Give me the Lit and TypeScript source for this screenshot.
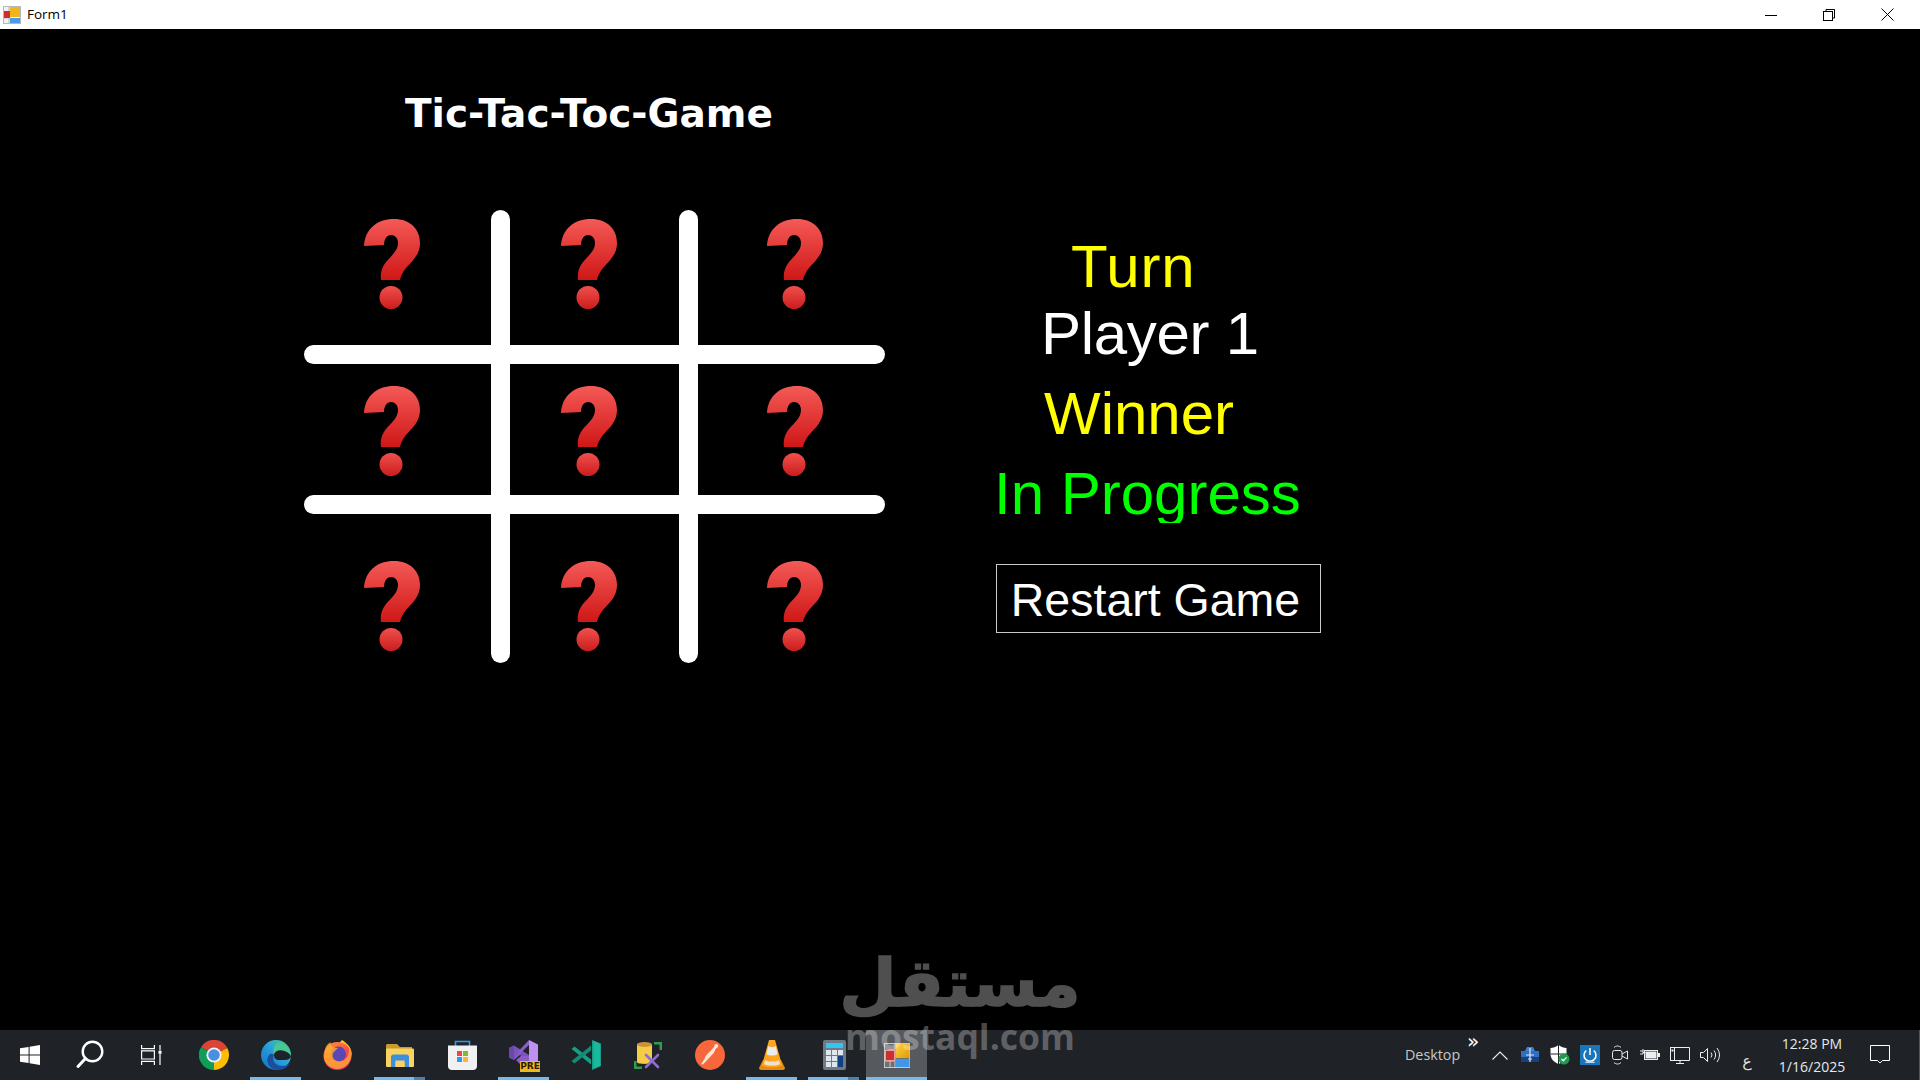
import { LitElement, html, css, svg } from "lit";
import { customElement } from "lit/decorators.js";

const question = () => html`<svg class="q" width="56" height="90" viewBox="0 0 56 90">
  <defs>
    <linearGradient id="qa" x1="0" y1="0" x2="0" y2="1"><stop offset="0" stop-color="#f45a56"/><stop offset="1" stop-color="#cf1717"/></linearGradient>
    <linearGradient id="qb" x1="0" y1="0" x2="0" y2="1"><stop offset="0" stop-color="#f0504c"/><stop offset="1" stop-color="#ca1d1d"/></linearGradient>
  </defs>
  <path fill="url(#qa)" d="M0 27C1 10 13 0 30 0C46 0 56 10 56 24C56 36 48 42 42 49C39 53 37 56 36 61H17C16 54 18 48 22 43C27 37 34 32 34 24C34 19 31 16 27 16C23 16 20 20 20 26Z"/>
  <circle cx="27" cy="78.5" r="11.5" fill="url(#qb)"/>
</svg>`;

const icons: Record<string, unknown> = {
  win: svg`<svg width="20" height="20" viewBox="0 0 20 20"><path fill="#fff" d="M0 3.2L8.6 2V9.6H0ZM9.6 1.8L20 0V9.6H9.6ZM0 10.6H8.6V18L0 16.8ZM9.6 10.6H20V20L9.6 18.2Z"/></svg>`,
  search: svg`<svg width="30" height="30" viewBox="0 0 30 30" fill="none" stroke="#fff"><circle cx="17.5" cy="11.5" r="9.8" stroke-width="2.4"/><path d="M10.5 18.5L3 26.5" stroke-width="3" stroke-linecap="round"/></svg>`,
  task: svg`<svg width="21" height="20" viewBox="0 0 21 20" fill="none" stroke="#fff" stroke-width="1.2"><path d="M0.6 0V3.6H13.4V0M0.6 5.8H13.4V14H0.6ZM0.6 20V16.4H13.4V20M19 0V5.5M19 9V20"/><rect x="17.5" y="5.8" width="3" height="3" fill="#fff" stroke="none"/></svg>`,
  chrome: svg`<svg width="30" height="30" viewBox="0 0 30 30"><path fill="#db4437" d="M15 15L2.2 7A15 15 0 0 1 28.3 8Z"/><path fill="#fbbc04" d="M15 15L28.3 8A15 15 0 0 1 15 30Z"/><path fill="#0f9d58" d="M15 15L15 30A15 15 0 0 1 2.2 7Z"/><circle cx="15" cy="15" r="7.6" fill="#f1f3f4"/><circle cx="15" cy="15" r="5.8" fill="#4a90e2"/></svg>`,
  edge: svg`<svg width="30" height="30" viewBox="0 0 30 30"><defs><linearGradient id="eg" x1="0" y1="1" x2="1" y2="0"><stop offset="0" stop-color="#0f70c4"/><stop offset=".55" stop-color="#2aa3dc"/><stop offset="1" stop-color="#52d67c"/></linearGradient></defs><circle cx="15" cy="15" r="15" fill="url(#eg)"/><path fill="#1f2227" d="M13 15C13 11 17 9.6 21 10.4C25 11.2 29 13 30 16.5C29.5 18.5 27 20 24 20H18C15 20 13 18 13 15Z"/><path fill="#1c4e9c" d="M8 15C4 20 7 29 16 30C22 30.5 27 27 29 23C26 26 22 26.5 18 25.5C13 24 11 19 13 15C11 13 9 13.5 8 15Z"/><path fill="#49c98e" d="M17 3C23 3 29 7 30 15.5C28 12 24 10 20 10C16 10 14 12 13 14C12 9 13 5 17 3Z"/></svg>`,
  firefox: svg`<svg width="30" height="30" viewBox="0 0 30 30"><defs><linearGradient id="ff" x1="0" y1="0" x2=".6" y2="1"><stop offset="0" stop-color="#ff9a2e"/><stop offset=".6" stop-color="#ff4a4a"/><stop offset="1" stop-color="#e5266e"/></linearGradient></defs><path fill="#ffc52e" d="M19 0C24 3 29 8 28.5 15H14C13 9 15 4 19 0Z"/><circle cx="14.5" cy="16" r="14" fill="url(#ff)"/><circle cx="15.5" cy="14" r="7.5" fill="#5b46b5"/><path fill="#ffb42e" d="M2 12C2 6 5 3 8 2.5C7.5 5 8.5 7 11 7.5L15 8L11 12C9 14 9 18 12 20C16 23 23 21 25 15C27 10 26 8 25 5C28.5 9 29 13 28.5 16C27 24 21 29 14.5 29C7 29 1 23 1 16Z" opacity=".75"/></svg>`,
  explorer: svg`<svg width="28" height="24" viewBox="0 0 28 24"><path fill="#c99a2e" d="M0 3C0 1.5 .5 1 2 1H11L14 4H26V8H0Z"/><rect x="0" y="5.5" width="28" height="18.5" rx="1" fill="#f9d25f"/><path fill="#3d8fe0" d="M5 24V14C5 12.5 6 11.5 7.5 11.5H20.5C22 11.5 23 12.5 23 14V24H18.5V17.5H9.5V24Z"/><rect x="9.5" y="19" width="9" height="5" fill="#f9d25f"/></svg>`,
  store: svg`<svg width="29" height="30" viewBox="0 0 29 30"><path fill="none" stroke="#2e9be6" stroke-width="1.6" d="M7.5 7V1.5H21.5V7"/><path fill="#f1f1f1" d="M0 5.5H29V26C29 28.5 27.5 30 25 30H4C1.5 30 0 28.5 0 26Z"/><rect x="9" y="11" width="5" height="5" fill="#ea4a3b"/><rect x="15" y="11" width="5" height="5" fill="#7ebb2e"/><rect x="9" y="17" width="5" height="5" fill="#2c9be6"/><rect x="15" y="17" width="5" height="5" fill="#fbb82a"/></svg>`,
  vs: svg`<svg width="30" height="30" viewBox="0 0 30 30"><path fill="#7a54b8" d="M0 8L5 5.5L20 15L20 21L11 15L5 20L0 17.5Z"/><path fill="#6a49ad" d="M0 8V17.5L5 20V5.5Z"/><path fill="#c090f0" d="M20 0L29 4.5V22H20Z"/><path fill="#8a5ec8" d="M6 18.5L20 5V0L11 9.5Z M20 22V16L12 16L7 20L12 25Z"/></svg>`,
  code: svg`<svg width="30" height="30" viewBox="0 0 30 30"><path fill="#14a087" d="M21 0L30 3.5V26L21 30Z"/><path fill="#1bb89c" d="M22.5 1L29 4V26L22.5 28.5Z"/><path fill="#14a087" d="M0.5 9L3.5 6.5L20 19.5V24.5L17 22Z"/><path fill="#0e8c76" d="M.5 21L3.5 23.5L20 10.5V5.5L17 8Z"/></svg>`,
  sql: svg`<svg width="28" height="28" viewBox="0 0 28 28"><path fill="#2e9b4e" d="M20 1H28V9H25.5V3.5H20ZM0 20H2.5V25.5H8V28H0Z"/><path fill="#f6cc45" d="M3 4C3 1 18 1 18 4V21C18 23.5 3 23.5 3 21Z"/><ellipse cx="10.5" cy="3.5" rx="7.5" ry="2.5" fill="#c9953a"/><path d="M12 14L24 26M24 14L12 26" stroke="#8d6cd6" stroke-width="2.6" stroke-linecap="round"/></svg>`,
  postman: svg`<svg width="30" height="30" viewBox="0 0 30 30"><circle cx="15" cy="15" r="15" fill="#f8673b"/><path fill="#f8e7d6" d="M21 4C23 4 24 6 22.5 7.5L20.5 9C20 12 17 15 15 17L8 24.5L6 24L9.5 19C10 16 13 13 15.5 11L19 7C19 5 20 4 21 4Z"/></svg>`,
  vlc: svg`<svg width="26" height="30" viewBox="0 0 26 30"><path fill="#e88a10" d="M4 20L0 28C0 29 1 30 2 30H24C25 30 26 29 26 28L22 20Z"/><path fill="#ffa51f" d="M10 0H16L23 25C21 28 5 28 3 25Z"/><path fill="#ececec" d="M9.2 6C11 7.5 15 7.5 16.8 6L18.5 14C16 16 10 16 7.5 14Z"/><path fill="#ececec" d="M6.2 20C9 22 17 22 19.8 20L21 24C18 26 8 26 5 24Z" opacity=".85"/></svg>`,
  calc: svg`<svg width="23" height="30" viewBox="0 0 23 30"><rect width="23" height="30" rx="2" fill="#707a84"/><rect x="3" y="3" width="17" height="5" fill="#35c5ee"/><g fill="#dfe6ee"><rect x="3" y="10" width="5" height="5"/><rect x="9" y="10" width="5" height="5"/><rect x="15" y="10" width="5" height="5"/><rect x="3" y="16" width="5" height="5"/><rect x="9" y="16" width="5" height="5"/><rect x="3" y="22" width="5" height="5"/><rect x="9" y="22" width="5" height="5"/></g><rect x="15" y="16" width="5" height="11" fill="#123e84"/></svg>`,
  form: svg`<svg width="26" height="25" viewBox="0 0 26 25"><rect x=".5" y=".5" width="25" height="24" fill="#6d6f72" stroke="#c8c8c8"/><path d="M11 1V24M1 18H11M6 18V24M1 7H11" stroke="#c8c8c8"/><defs><linearGradient id="fy" x1="0" y1="0" x2="1" y2="1"><stop offset="0" stop-color="#ffd44a"/><stop offset="1" stop-color="#e09a00"/></linearGradient></defs><rect x="11.5" y="1" width="14" height="14" fill="url(#fy)"/><rect x="11.5" y="16" width="14" height="8" fill="#3f97e6"/><rect x="1.5" y="7.5" width="9" height="10" fill="#cf2e2e" stroke="#e8a0a0"/></svg>`,
  toolbox: svg`<svg width="18" height="18" viewBox="0 0 18 18"><path fill="#2f6fc2" d="M0 5H18V16H0Z"/><path fill="#1c3f7c" d="M0 11H18V16H0Z"/><path fill="#3f7fd6" d="M4 5L6 1H12L14 5Z"/><path stroke="#dfe8f4" stroke-width="1.2" d="M9 2V16M5 9H13M7 13H11"/></svg>`,
  shield: svg`<svg width="20" height="20" viewBox="0 0 20 20"><path fill="#fff" d="M8.5 0C6 2 3 3 .5 3V9C.5 14 4 17 8.5 19C13 17 16.5 14 16.5 9V3C14 3 11 2 8.5 0Z"/><path stroke="#1f2227" stroke-width="1" d="M8.5 0V19M.5 9H16.5"/><circle cx="14" cy="14" r="5.5" fill="#1f9b4e"/><path d="M11.5 14L13.3 15.8L16.5 12.4" fill="none" stroke="#fff" stroke-width="1.3"/></svg>`,
  power: svg`<svg width="20" height="20" viewBox="0 0 20 20"><rect width="20" height="20" fill="#1b75bb"/><path d="M10 3V10M6.3 5.5A6 6 0 1 0 13.7 5.5" fill="none" stroke="#fff" stroke-width="1.5"/><rect x="5.5" y="16.5" width="9" height="1.5" fill="#bcd8ee"/></svg>`,
  cam: svg`<svg width="16" height="20" viewBox="0 0 16 20" fill="none" stroke="#e8e8e8"><rect x=".5" y="5.5" width="9.5" height="9" rx="2"/><path d="M10 9L15.5 6V14L10 11M2 2.5C4 .5 7 .5 9 2.5M2 17.5C4 19.5 7 19.5 9 17.5"/></svg>`,
  battery: svg`<svg width="20" height="14" viewBox="0 0 20 14"><path d="M0 3H3V1M0 6H3V3M3 4.5H5.5" stroke="#eee" fill="none"/><rect x="4.5" y="2.5" width="13" height="9" fill="none" stroke="#eee"/><rect x="5.5" y="3.5" width="11" height="7" fill="#eee"/><rect x="18" y="5" width="2" height="4" fill="#eee"/></svg>`,
  net: svg`<svg width="20" height="17" viewBox="0 0 20 17" fill="none" stroke="#eee"><path d="M4.5 .5H19.5V13.5H1.5M10 13.5V16.5M6 16.5H14"/><rect x=".5" y=".5" width="4" height="13" fill="#1f2227"/><rect x="1.5" y="2.5" width="2" height="2" fill="#eee" stroke="none"/></svg>`,
  vol: svg`<svg width="21" height="16" viewBox="0 0 21 16" fill="none" stroke="#eee"><path d="M.5 5.5H3.5L7.5 1.5V14.5L3.5 10.5H.5ZM11 5.5A4 4 0 0 1 11 10.5M14 3.5A7 7 0 0 1 14 12.5M17 1A11 11 0 0 1 17 15"/></svg>`,
  note: svg`<svg width="20" height="20" viewBox="0 0 20 20" fill="none" stroke="#fff"><path d="M.5 .5H19.5V15.5H12.5L10 18L7.5 15.5H.5Z"/></svg>`,
};

@customElement("app-root")
export class AppRoot extends LitElement {
  static styles = css`
    :host { display: block; width: 1920px; height: 1080px; position: relative; overflow: hidden; background: #000; font-family: "Liberation Sans", Arial, sans-serif; }
    .app { display: flex; flex-direction: column; height: 1080px; }

    .titlebar { height: 29px; flex: none; background: #fff; display: flex; align-items: center; padding-right: 4px; }
    .app-icon { margin-left: 3px; margin-right: 6px; display: flex; }
    .title-text { font: 13.5px/18px "Open Sans", sans-serif; color: #000; flex: 1; position: relative; top: -1px; }
    .ctrl { width: 58px; display: flex; justify-content: center; align-items: center; }
    .ctrl svg { display: block; }

    .main { flex: 1; background: #000; display: flex; flex-direction: column; }
    .heading { height: 181px; flex: none; padding: 65px 0 0 405px; box-sizing: border-box; font: bold 39px/40px "DejaVu Sans", sans-serif; color: #fff; }
    .content { display: flex; align-items: flex-start; padding-left: 304px; }

    .board { display: grid; grid-template-columns: 187px 19px 169px 19px 187px; grid-template-rows: 135px 19px 131px 19px 149px; width: 581px; height: 453px; flex: none; }
    .v { background: #fff; border-radius: 10px; grid-row: 1 / 6; }
    .v1 { grid-column: 2; }
    .v2 { grid-column: 4; }
    .h { background: #fff; border-radius: 10px; grid-column: 1 / 6; }
    .h1 { grid-row: 2; }
    .h2 { grid-row: 4; }
    .cell { display: flex; justify-content: flex-start; align-items: flex-start; }
    .q { display: block; }

    .panel { margin-left: 111px; padding-top: 23px; display: flex; flex-direction: column; }
    .label { font-size: 60px; line-height: 68px; overflow: hidden; white-space: nowrap; }
    .turn { height: 67px; padding-left: 75px; color: #ff0; letter-spacing: .8px; }
    .player { height: 80px; padding-left: 45px; color: #fff; letter-spacing: -.3px; }
    .winner { height: 80px; padding-left: 48px; color: #ff0; }
    .status { height: 63px; margin-left: -2px; color: #0f0; margin-bottom: 41px; }
    .restart { width: 325px; height: 69px; box-sizing: border-box; border: 1px solid #c9c9c9; background: #000; color: #fff; font: 46.5px/68px "Liberation Sans", Arial, sans-serif; padding: 1px 6px 0 0; margin: 0; text-align: center; }

    .taskbar { height: 50px; flex: none; background: #1f2227; display: flex; align-items: stretch; color: #ddd; }
    .btn { width: 62px; flex: none; position: relative; display: flex; align-items: center; justify-content: center; }
    .btn.sys { width: 60px; }
    .btn.sys.last { width: 63px; }
    .btn.active::after { content: ""; position: absolute; left: 5px; right: 6px; bottom: 0; height: 3px; background: #76b9ed; }
    .btn.stack::before { content: ""; position: absolute; left: 45px; width: 11px; bottom: 0; height: 3px; background: #4a82ae; z-index: 1; }
    .btn.focus { background: #56595e; width: 61px; margin-left: 1px; }
    .btn.focus::after { left: 0; right: 0; }
    .badge { position: absolute; left: 27px; top: 31px; width: 20px; height: 11px; background: #f3b61c; color: #2a2000; font: bold 9px/11px "DejaVu Sans", sans-serif; text-align: center; }
    .spacer { flex: 1; }
    .tray { display: flex; align-items: center; position: relative; flex: none; width: 520px; }
    .desk { font: 14.3px "Open Sans", sans-serif; color: #c8c8c8; width: 85px; padding-left: 5px; box-sizing: border-box; position: relative; top: -1px; }
    .more { position: absolute; left: 67px; top: -1px; font: 20px "DejaVu Sans", sans-serif; color: #fff; }
    .tico { width: 30px; display: flex; justify-content: center; align-items: center; flex: none; }
    .lang { width: 30px; margin-left: 7px; text-align: center; font: 16px "DejaVu Sans", sans-serif; color: #ddd; flex: none; position: relative; top: 5px; }
    .clock { width: 100px; text-align: center; font: 14px/23px "Open Sans", sans-serif; color: #e8e8e8; flex: none; }
    .note { width: 38px; margin-left: -1px; display: flex; justify-content: center; flex: none; }
    .edge { width: 1px; align-self: stretch; background: #555; margin-left: auto; }

    .watermark { position: absolute; left: 845px; top: 951px; width: 230px; pointer-events: none; display: flex; flex-direction: column; align-items: center; color: rgba(255,255,255,.3); }
    .wm-ar { font: bold 66px/66px "DejaVu Sans", sans-serif; height: 66px; white-space: nowrap; color: #4f4f4f; -webkit-text-stroke: 1.5px #4f4f4f; }
    .wm-en { font: bold 35.5px/36px "Open Sans", sans-serif; white-space: nowrap; margin-top: 1px; }
  `;

  private tb(name: string, cls = "", extra: unknown = "") {
    return html`<div class="btn ${cls}">${icons[name]}${extra}</div>`;
  }

  render() {
    const tico = (n: string) => html`<div class="tico">${icons[n]}</div>`;
    return html`
      <div class="app">
        <div class="titlebar">
          <div class="app-icon">
            <svg width="18" height="18" viewBox="0 0 18 18"><rect x=".5" y=".5" width="17" height="17" fill="#f2f2f2" stroke="#b8b8b8"/><path d="M6 1V17M1 12H6" stroke="#b8b8b8"/><rect x="7" y="1" width="10" height="10" fill="#f0b41c"/><rect x="7" y="12" width="10" height="5" fill="#4b9ce8"/><rect x="1" y="5" width="6" height="7" fill="#cf2e2e"/></svg>
          </div>
          <div class="title-text">Form1</div>
          <div class="ctrl"><svg width="12" height="12" viewBox="0 0 12 12"><path d="M0 6.5H12" stroke="#000"/></svg></div>
          <div class="ctrl"><svg width="12" height="12" viewBox="0 0 12 12" fill="none" stroke="#000"><path d="M3 2.5V.5H11.5V9H9.5"/><rect x=".5" y="2.5" width="9" height="9"/></svg></div>
          <div class="ctrl"><svg width="13" height="13" viewBox="0 0 13 13"><path d="M.5 .5L12.5 12.5M12.5 .5L.5 12.5" stroke="#000" fill="none"/></svg></div>
        </div>

        <div class="main">
          <div class="heading">Tic-Tac-Toc-Game</div>
          <div class="content">
            <div class="board">
              <div class="v v1"></div>
              <div class="v v2"></div>
              <div class="h h1"></div>
              <div class="h h2"></div>
              ${[
                [1, 1, 60, 9],
                [3, 1, 51, 9],
                [5, 1, 69, 9],
                [1, 3, 60, 22],
                [3, 3, 51, 22],
                [5, 3, 69, 22],
                [1, 5, 60, 47],
                [3, 5, 51, 47],
                [5, 5, 69, 47],
              ].map(
                ([c, r, l, t]) =>
                  html`<div class="cell" style="grid-column:${c};grid-row:${r};padding:${t}px 0 0 ${l}px">${question()}</div>`
              )}
            </div>
            <div class="panel">
              <div class="label turn">Turn</div>
              <div class="label player">Player 1</div>
              <div class="label winner">Winner</div>
              <div class="label status">In Progress</div>
              <button class="restart">Restart Game</button>
            </div>
          </div>
        </div>

        <div class="taskbar">
          ${this.tb("win", "sys")}
          ${this.tb("search", "sys")}
          ${this.tb("task", "sys last")}
          ${this.tb("chrome")}
          ${this.tb("edge", "active")}
          ${this.tb("firefox")}
          ${this.tb("explorer", "active stack")}
          ${this.tb("store")}
          ${this.tb("vs", "active", html`<span class="badge">PRE</span>`)}
          ${this.tb("code")}
          ${this.tb("sql")}
          ${this.tb("postman")}
          ${this.tb("vlc", "active")}
          ${this.tb("calc", "active stack")}
          ${this.tb("form", "active focus")}
          <div class="spacer"></div>
          <div class="tray">
            <div class="desk">Desktop</div>
            <span class="more">»</span>
            <div class="tico"><svg width="16" height="9" viewBox="0 0 16 9" fill="none" stroke="#eee" stroke-width="1.1"><path d="M.5 8.5L8 1L15.5 8.5"/></svg></div>
            ${tico("toolbox")}${tico("shield")}${tico("power")}${tico("cam")}${tico("battery")}${tico("net")}${tico("vol")}
            <div class="lang">ع</div>
            <div class="clock">12:28 PM<br />1/16/2025</div>
            <div class="note">${icons.note}</div>
            <div class="edge"></div>
          </div>
        </div>
      </div>

      <div class="watermark">
        <div class="wm-ar">مستقل</div>
        <div class="wm-en">mostaql.com</div>
      </div>
    `;
  }
}
